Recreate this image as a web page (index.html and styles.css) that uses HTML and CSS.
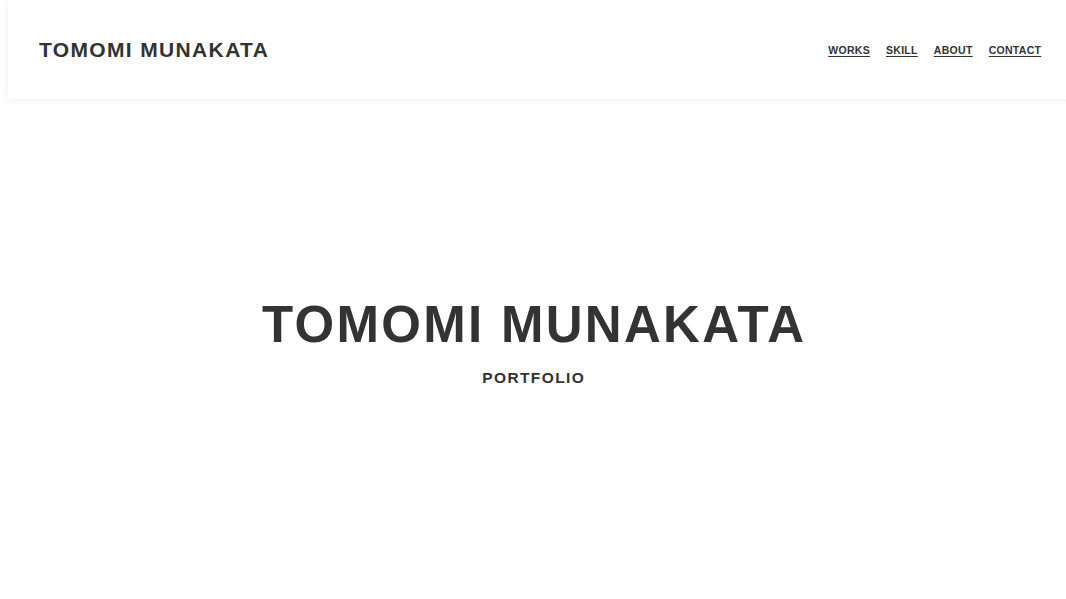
FILE: index.html
```html
<!DOCTYPE html>
<html lang="ja">
<head>
<meta charset="utf-8">
<title>TOMOMI MUNAKATA PORTFOLIO</title>
<link rel="stylesheet" href="styles.css">
</head>
<body>
<header class="site-header">
  <a class="logo" href="#">TOMOMI MUNAKATA</a>
  <nav class="nav">
    <a href="#works">WORKS</a>
    <a href="#skill">SKILL</a>
    <a href="#about">ABOUT</a>
    <a href="#contact">CONTACT</a>
  </nav>
</header>
<main class="hero">
  <h1 class="hero-title">TOMOMI MUNAKATA</h1>
  <p class="hero-sub">PORTFOLIO</p>
</main>
</body>
</html>
```
FILE: styles.css
```css
html, body {
  margin: 0;
  padding: 0;
  height: 100%;
  overflow: hidden;
  background: #fff;
}
body {
  font-family: "Liberation Sans", Arial, sans-serif;
  color: #333;
}
.site-header {
  box-sizing: border-box;
  height: 99px;
  width: 100%;
  margin-left: 8px;
  padding: 0 33px 0 31px;
  display: flex;
  align-items: center;
  justify-content: space-between;
  background: #fff;
  box-shadow: 0 1px 8px rgba(0, 0, 0, 0.07);
  position: relative;
  z-index: 1;
}
.logo {
  font-size: 21px;
  font-weight: bold;
  letter-spacing: 1.35px;
  color: #333;
  text-decoration: none;
}
.nav {
  display: flex;
  gap: 16px;
}
.nav a {
  font-size: 10.5px;
  font-weight: bold;
  letter-spacing: 0.3px;
  color: #333;
  text-decoration: underline;
  text-underline-offset: 2px;
}
.nav a:last-child {
  margin-right: -0.3px;
}
.hero {
  height: 500px;
  display: flex;
  flex-direction: column;
  align-items: center;
  justify-content: center;
  padding-bottom: 13px;
  box-sizing: border-box;
}
.hero-title {
  margin: 0;
  font-size: 51px;
  line-height: 1;
  font-weight: bold;
  letter-spacing: 2.3px;
  margin-right: -2.3px;
}
.hero-sub {
  margin: 20px 0 0;
  font-size: 15.5px;
  line-height: 1;
  font-weight: bold;
  letter-spacing: 1.4px;
  margin-right: -1.4px;
}
```
